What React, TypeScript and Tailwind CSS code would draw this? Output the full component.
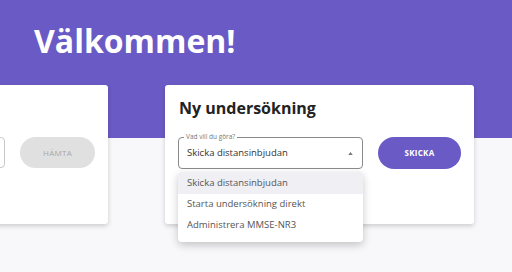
export default function App() {
  return (
    <div className="min-h-[272px] w-[512px] overflow-hidden bg-[#f8f8fa] font-['Open_Sans',sans-serif]">
      <div className="h-[138px] bg-[#6a5ac5] pl-[34px] pt-[21px]">
        <h1 className="text-[32px] font-bold leading-[40px] text-white">Välkommen!</h1>
      </div>

      <div className="-mt-[53px] -ml-[201px] flex gap-[57px]">
        {/* left card, mostly off-screen */}
        <div className="h-[139px] w-[309px] rounded-[3px] bg-white px-[13px] pt-[52px] shadow-[0_2px_5px_rgba(0,0,0,0.18)]">
          <div className="flex items-center gap-[15px]">
            <div className="h-[31px] w-[193px] rounded-[4px] border border-[#c8c8c8]" />
            <button className="h-[31px] w-[75px] rounded-full bg-[#e0e0e0] text-[8px] tracking-[0.3px] text-[#a8a8a8]">
              HÄMTA
            </button>
          </div>
        </div>

        {/* right card */}
        <div className="h-[139px] w-[309px] rounded-[3px] bg-white px-[13px] pt-[12px] shadow-[0_2px_5px_rgba(0,0,0,0.18)]">
          <h2 className="pl-[1px] text-[16px] font-bold leading-[22px] text-[#222]">Ny undersökning</h2>
          <div className="mt-[18px] flex items-center gap-[15px]">
            <div className="relative h-[32px] w-[185px]">
              <div className="flex h-full items-center justify-between rounded-[4px] border border-[#8a8a8a] pl-[8px] pr-[9px]">
                <span className="text-[9.5px] text-[#333]">Skicka distansinbjudan</span>
                <svg width="5" height="3" viewBox="0 0 6 4">
                  <path d="M0 4 L3 0 L6 4 Z" fill="#777" />
                </svg>
              </div>
              <span className="absolute -top-[5px] left-[6px] bg-white px-[2px] text-[6.5px] leading-[9px] text-[#777]">
                Vad vill du göra?
              </span>

              <ul className="absolute left-0 top-[35px] z-10 w-[185px] rounded-[4px] bg-white pb-[6px] text-[9.5px] text-[#555] shadow-[0_3px_8px_rgba(0,0,0,0.22)]">
                <li className="flex h-[22px] items-center rounded-t-[4px] bg-[#efeff4] px-[9px]">Skicka distansinbjudan</li>
                <li className="flex h-[21px] items-center px-[9px]">Starta undersökning direkt</li>
                <li className="flex h-[21px] items-center px-[9px]">Administrera MMSE-NR3</li>
              </ul>
            </div>
            <button className="h-[32px] w-[83px] rounded-full bg-[#6a5ac5] text-[8px] font-bold tracking-[0.3px] text-white">
              SKICKA
            </button>
          </div>
        </div>
      </div>
    </div>
  )
}
